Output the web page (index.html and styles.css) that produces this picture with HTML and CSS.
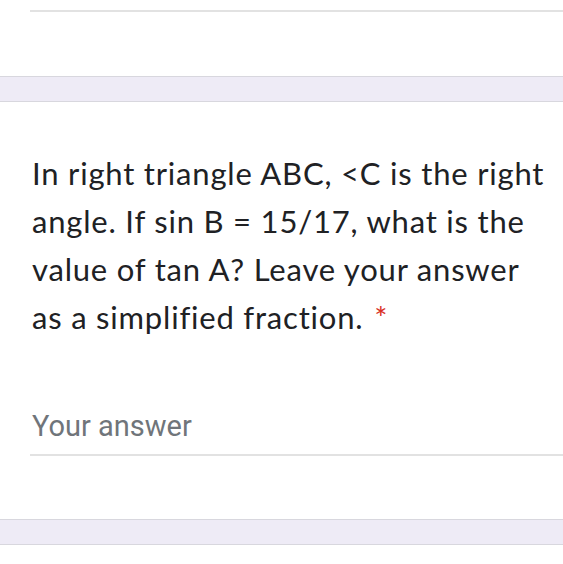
FILE: index.html
```html
<!DOCTYPE html>
<html>
<head>
<meta charset="utf-8">
<link rel="stylesheet" href="styles.css">
</head>
<body>
<div class="card card-top">
  <div class="top-line"></div>
</div>
<div class="band"></div>
<div class="card question">
  <div class="title">In right triangle ABC, &lt;C is the right angle. If sin B = 15/17, what is the value of tan A? Leave your answer as a simplified fraction. <span class="req">*</span></div>
  <div class="answer">Your answer</div>
</div>
<div class="band"></div>
<div class="card card-bottom"></div>
</body>
</html>
```
FILE: styles.css
```css
html, body {
  margin: 0;
  padding: 0;
  background: #ffffff;
  overflow: hidden;
}
body {
  width: 563px;
  height: 564px;
}
.card {
  background: #ffffff;
}
.card-top {
  height: 76px;
  padding-top: 10px;
  box-sizing: border-box;
}
.top-line {
  margin-left: 30px;
  border-top: 2px solid #e2e2e2;
}
.band {
  height: 24px;
  background: #eeebf6;
  border-top: 1px solid #d8d7de;
  border-bottom: 1px solid #d8d7de;
}
.question {
  padding: 47px 0 0 32px;
  height: 417px;
  box-sizing: border-box;
}
.title {
  font-family: "Lato", "Open Sans", sans-serif;
  font-size: 31px;
  letter-spacing: 0.8px;
  line-height: 48px;
  color: #202124;
  padding-right: 11px;
}
.req {
  color: #d93025;
  margin-left: 2px;
}
.answer {
  margin-top: 67px;
  font-family: "Roboto", sans-serif;
  font-size: 29px;
  line-height: 36px;
  color: #70757a;
  padding-bottom: 10px;
  border-bottom: 2px solid #e2e2e2;
  margin-left: -2px;
  padding-left: 2px;
}
.card-bottom {
  height: 20px;
}
```
